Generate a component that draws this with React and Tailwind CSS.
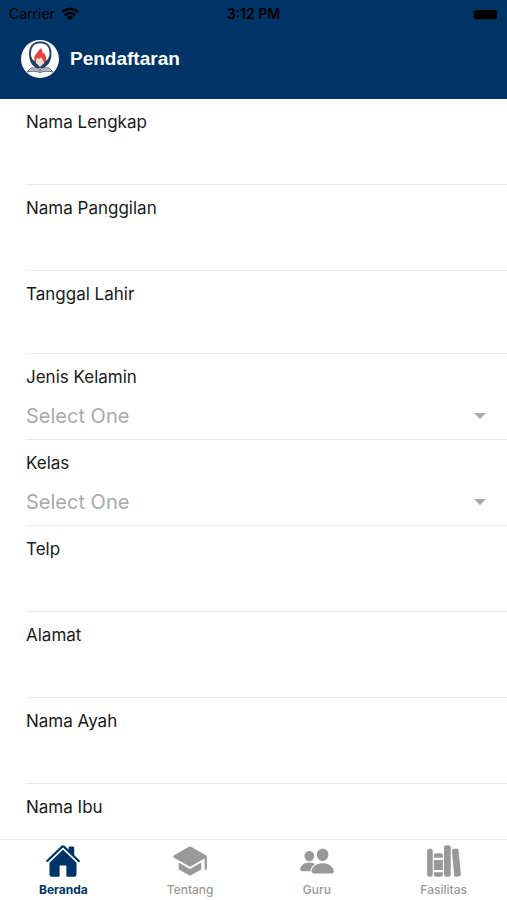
import { IoHome, IoSchool, IoPeople, IoLibrary } from "react-icons/io5";

const fields = [
  { id: "nama-lengkap", label: "Nama Lengkap", type: "text" },
  { id: "nama-panggilan", label: "Nama Panggilan", type: "text" },
  { id: "tanggal-lahir", label: "Tanggal Lahir", type: "date" },
  { id: "jenis-kelamin", label: "Jenis Kelamin", type: "select", options: ["Laki-laki", "Perempuan"] },
  { id: "kelas", label: "Kelas", type: "select", options: ["A", "B"] },
  { id: "telp", label: "Telp", type: "text" },
  { id: "alamat", label: "Alamat", type: "text" },
  { id: "nama-ayah", label: "Nama Ayah", type: "text" },
  { id: "nama-ibu", label: "Nama Ibu", type: "text" },
];

const tabs = [
  { label: "Beranda", Icon: IoHome, active: true },
  { label: "Tentang", Icon: IoSchool },
  { label: "Guru", Icon: IoPeople },
  { label: "Fasilitas", Icon: IoLibrary },
];

function WifiIcon() {
  return (
    <svg viewBox="0 0 18 14" className="h-[14px] w-[18px]" aria-hidden="true">
      <g fill="none" stroke="black" strokeWidth="2.4">
        <path d="M1 5.2a11.4 11.4 0 0 1 16 0" />
        <path d="M3.9 8.4a7.3 7.3 0 0 1 10.2 0" />
      </g>
      <path d="M5.9 10.2a4.6 4.6 0 0 1 6.2 0L9 13.5z" fill="black" />
    </svg>
  );
}

function Logo() {
  return (
    <svg viewBox="0 0 38 38" className="size-[38px] shrink-0" role="img" aria-label="Logo">
      <circle cx="19" cy="19" r="19" fill="white" />
      <path d="M12.500 24C7.500 18 8 7.500 13 4c3.500-2.500 9-2.500 12.500 0C30.500 7.500 31 18 26 24" fill="none" stroke="#26456b" strokeWidth="2" />
      <path d="M9 15.500c1.500 1.500 2 4.500 4.500 5.500 2.200.8 4.500 2.500 5.500 5 1-2.500 3.300-4.200 5.500-5 2.500-1 3-4 4.500-5.500 1 5.500-2 10-6.500 12.500h-7c-4.500-2.500-7.500-7-6.500-12.500z" fill="#1d3d66" />
      <path d="M19.500 8c-1 3-6.500 6.500-6.300 11 .3 3.500 2.600 4.500 5.800 4.500s5.800-1.200 6.200-4.500c.2-3-1.700-4.500-2.200-6.500-.4.700-.8 1-1.200 1.500.2-2.500-.8-4.500-2.300-6z" fill="#e8403f" />
      <path d="M15 20c.8-2.500 2.500-2.500 3.300-.8.500-2 2.800-2 3.200.3l1.800 3.500-4.300 4-4-4z" fill="#f6dccb" />
      <path d="M10 28c3.500-.8 6.500 0 9 1.500 2.500-1.500 5.500-2.300 9-1.500l4 4c-4.500-1.200-9-1-13 .5-4-1.500-8.500-1.700-13-.5z" fill="#e7e4df" stroke="#435a75" strokeWidth="0.9" />
      <path d="M9.500 30c3.500-.6 6.500-.2 9.500 1 3-1.200 6-1.600 9.500-1M19 28.500v3.500" fill="none" stroke="#66778c" strokeWidth="0.8" />
    </svg>
  );
}

function Field({ id, label, type, options }) {
  return (
    <div className="ml-[26px] border-b border-[#e8e8e8] pt-[11px]">
      <label htmlFor={id} className="block text-[17px] leading-6 text-[#1a1a1a]">
        {label}
      </label>
      {type === "select" ? (
        <div className="mt-1 grid items-center">
          <select
            id={id}
            defaultValue=""
            className="col-start-1 row-start-1 h-[46px] w-full appearance-none bg-transparent text-xl text-[#aaaaaa] outline-none"
          >
            <option value="">Select One</option>
            {options.map((option) => (
              <option key={option}>{option}</option>
            ))}
          </select>
          <svg
            viewBox="0 0 12 6"
            className="pointer-events-none col-start-1 row-start-1 mr-[21px] h-[6px] w-[12px] justify-self-end"
            aria-hidden="true"
          >
            <path d="M0 0h12L6 6z" fill="#aaaaaa" />
          </svg>
        </div>
      ) : (
        <input
          id={id}
          type="text"
          className={`mt-1 block w-full bg-transparent pr-5 text-xl outline-none ${type === "date" ? "h-[43px]" : "h-[46px]"}`}
        />
      )}
    </div>
  );
}

export default function App() {
  return (
    <div className="flex h-screen flex-col bg-white font-['Inter','Liberation_Sans',sans-serif]">
      <header className="shrink-0 bg-[#003366] pb-5">
        <div className="grid h-7 grid-cols-3 items-center px-[9px] text-sm text-black">
          <div className="flex items-center gap-[6px]">
            <span>Carrier</span>
            <WifiIcon />
          </div>
          <span className="text-center font-semibold">3:12 PM</span>
          <span className="flex h-3 w-[26px] items-center justify-center justify-self-end rounded-[4px] border border-[#002b57]">
            <span className="h-[9px] w-[23px] rounded-[2px] bg-black" />
          </span>
        </div>
        <div className="mt-3 flex items-center gap-[11px] px-[21px] pb-px">
          <Logo />
          <h1 className="font-['Liberation_Sans',Arial,sans-serif] text-[19px] font-bold leading-6 text-white">
            Pendaftaran
          </h1>
        </div>
      </header>

      <main className="min-h-0 flex-1 overflow-y-auto [scrollbar-width:none]">
        <form>
          {fields.map((field) => (
            <Field key={field.id} {...field} />
          ))}
        </form>
      </main>

      <nav className="grid shrink-0 grid-cols-4 border-t border-[#ececec] bg-white pb-[2px] pt-[3px]">
        {tabs.map(({ label, Icon, active }) => (
          <a
            key={label}
            href="#"
            aria-current={active ? "page" : undefined}
            className={`flex flex-col items-center gap-[3px] text-xs ${active ? "font-bold text-[#003366]" : "font-medium text-[#999999]"}`}
          >
            <Icon className="size-9" aria-hidden="true" />
            <span>{label}</span>
          </a>
        ))}
      </nav>
    </div>
  );
}
